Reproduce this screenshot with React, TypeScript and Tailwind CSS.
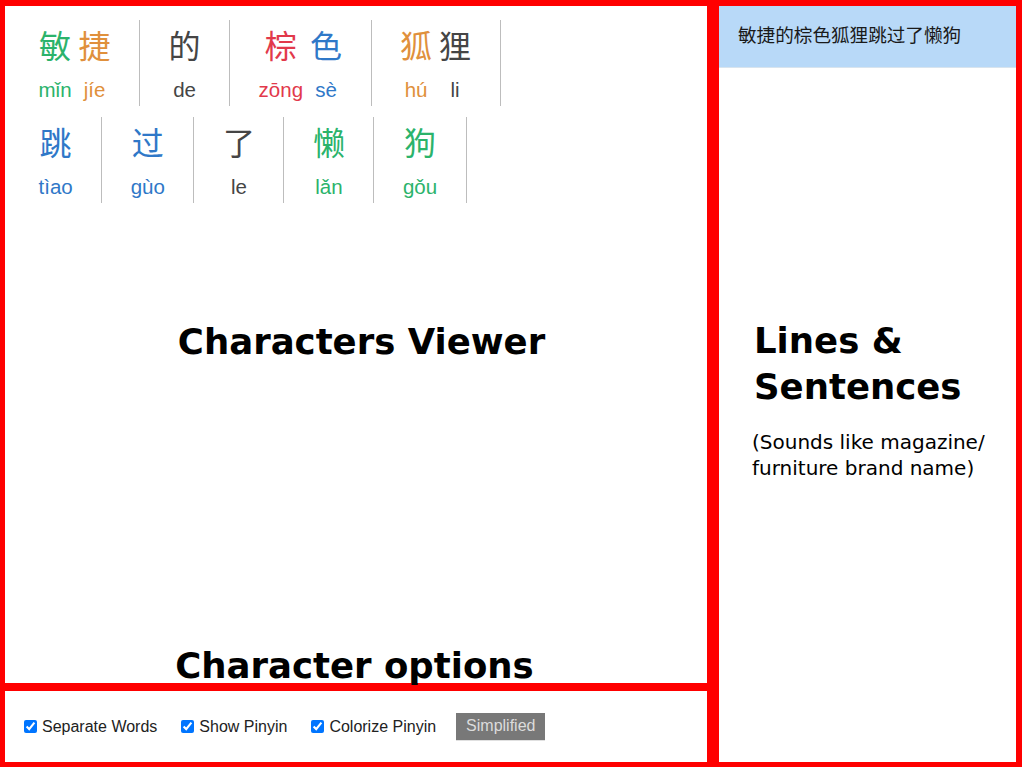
const toneColor: Record<number, string> = {
  1: 'text-[#e2394b]',
  2: 'text-[#e0903c]',
  3: 'text-[#2bb36b]',
  4: 'text-[#2f78c8]',
  5: 'text-[#454545]',
};

type Syl = [string, string, number];

const lines: Syl[][][] = [
  [
    [['敏', 'mǐn', 3], ['捷', 'jíe', 2]],
    [['的', 'de', 5]],
    [['棕', 'zōng', 1], ['色', 'sè', 4]],
    [['狐', 'hú', 2], ['狸', 'li', 5]],
  ],
  [
    [['跳', 'tìao', 4]],
    [['过', 'gùo', 4]],
    [['了', 'le', 5]],
    [['懒', 'lǎn', 3]],
    [['狗', 'gǒu', 3]],
  ],
];

function Word({ syls }: { syls: Syl[] }) {
  return (
    <div className="flex gap-[7px] px-[28.5px] pt-[4px] pb-[2px] border-r border-[#bdbdbd]">
      {syls.map(([han, py, tone], i) => (
        <div key={i} className={`flex flex-col items-center ${toneColor[tone]}`}>
          <span className="text-[32px] leading-[40px] font-['Noto_Sans_CJK_SC',sans-serif]">{han}</span>
          <span className="mt-[12px] text-[20.5px] leading-[28px] font-['Liberation_Sans',Arial,sans-serif]">{py}</span>
        </div>
      ))}
    </div>
  );
}

function Option({ label, last }: { label: string; last?: boolean }) {
  return (
    <label className={`flex items-center gap-[5px] ${last ? 'mr-5' : 'mr-6'}`}>
      <input type="checkbox" defaultChecked className="m-0 w-[13px] h-[13px] accent-[#0075ff]" />
      <span>{label}</span>
    </label>
  );
}

export default function App() {
  return (
    <div className="flex w-[1022px] h-[767px] bg-white overflow-hidden">
      <div className="relative flex flex-col w-[713px]">
        <section className="relative h-[687px] border-[6px] border-l-[5px] border-b-4 border-[#ff0000] pl-[5px] pt-[14px]">
          <div className="flex flex-col gap-[11px]">
            {lines.map((words, r) => (
              <div key={r} className="flex">
                {words.map((w, i) => <Word key={i} syls={w} />)}
              </div>
            ))}
          </div>
          <h2 className="absolute left-0 right-0 top-[313px] pl-[11px] text-center text-[35.5px] leading-[46px] font-bold text-black font-['DejaVu_Sans',sans-serif]">
            Characters Viewer
          </h2>
        </section>

        <h2 className="absolute left-0 right-0 top-[643px] pr-[4px] text-center text-[35.5px] leading-[46px] font-bold text-black font-['DejaVu_Sans',sans-serif]">
          Character options
        </h2>

        <section className="relative z-10 flex-1 flex items-center border-[5px] border-t-4 border-r-[6px] border-[#ff0000] pl-[19px] text-[16px] text-[#222] font-['Liberation_Sans',Arial,sans-serif]">
          <Option label="Separate Words" />
          <Option label="Show Pinyin" />
          <Option label="Colorize Pinyin" last />
          <button className="h-[28px] px-[10px] bg-[#787878] text-[#dcdcdc] border-b border-[#e0e0e0]">Simplified</button>
        </section>
      </div>

      <aside className="flex-1 flex flex-col border-[6px] border-b-[5px] border-[#ff0000]">
        <div className="h-[62px] flex items-center pl-[19px] pb-[6px] bg-[#b8d9f8] border-b border-[#d8e4ee] text-[18.6px] text-[#1a1a1a] font-['Noto_Sans_CJK_SC',sans-serif]">
          敏捷的棕色狐狸跳过了懒狗
        </div>
        <div className="pl-[35px] pr-4 pt-[250px]">
          <h2 className="text-[35.5px] leading-[46px] font-bold text-black font-['DejaVu_Sans',sans-serif]">
            Lines &amp;<br />Sentences
          </h2>
          <p className="mt-[19px] -ml-[2px] text-[20px] leading-[26px] text-black font-['DejaVu_Sans',Verdana,sans-serif]">
            (Sounds like magazine/<br />furniture brand name)
          </p>
        </div>
      </aside>
    </div>
  );
}
